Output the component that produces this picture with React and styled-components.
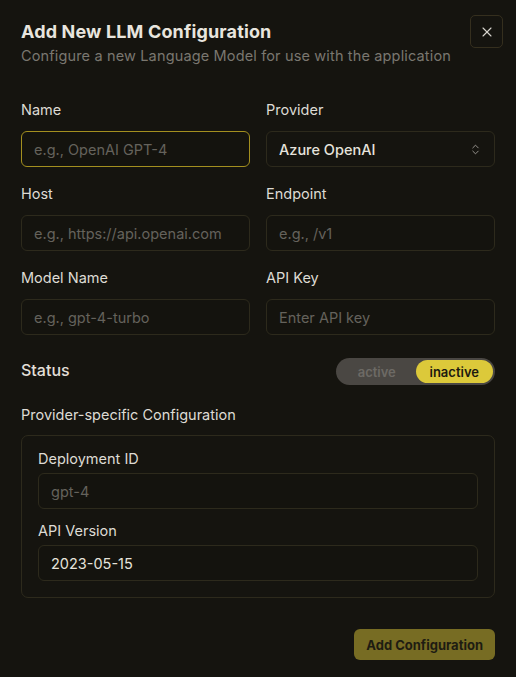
import styled, { createGlobalStyle } from 'styled-components';
import { ChevronsUpDown, X } from 'lucide-react';

const Global = createGlobalStyle`
    html, body {
        margin: 0;
        background: #15140f;
    }
    body {
        font-family: Inter, "Noto Sans", sans-serif;
        color: #e4e1da;
    }
    * { box-sizing: border-box; }
`;

export default function App() {
    return <Dialog>
        <Global />
        <Close aria-label="close"><X size={16} strokeWidth={1.6} /></Close>
        <Header>
            <Title>Add New LLM Configuration</Title>
            <Subtitle>Configure a new Language Model for use with the application</Subtitle>
        </Header>

        <Grid>
            <Field>
                <Label>Name</Label>
                <Input placeholder="e.g., OpenAI GPT-4" focused />
            </Field>
            <Field>
                <Label>Provider</Label>
                <Select>
                    <span>Azure OpenAI</span>
                    <ChevronsUpDown size={13} strokeWidth={1.6} color="#a9a6a0" />
                </Select>
            </Field>
            <Field>
                <Label>Host</Label>
                <Input placeholder="e.g., https://api.openai.com" />
            </Field>
            <Field>
                <Label>Endpoint</Label>
                <Input placeholder="e.g., /v1" />
            </Field>
            <Field>
                <Label>Model Name</Label>
                <Input placeholder="e.g., gpt-4-turbo" />
            </Field>
            <Field>
                <Label>API Key</Label>
                <Input placeholder="Enter API key" />
            </Field>
        </Grid>

        <StatusRow>
            <StatusLabel>Status</StatusLabel>
            <Toggle>
                <ToggleOption>active</ToggleOption>
                <ToggleOption selected>inactive</ToggleOption>
            </Toggle>
        </StatusRow>

        <Section>
            <Label>Provider-specific Configuration</Label>
            <Box>
                <InnerField>
                    <Label>Deployment ID</Label>
                    <Input placeholder="gpt-4" />
                </InnerField>
                <InnerField>
                    <Label>API Version</Label>
                    <Input defaultValue="2023-05-15" />
                </InnerField>
            </Box>
        </Section>

        <Footer>
            <Submit>Add Configuration</Submit>
        </Footer>
    </Dialog>
}

const Dialog = styled.div`
    position: relative;
    width: 516px;
    min-height: 677px;
    padding: 18px 21px 17px;
    display: flex;
    flex-direction: column;
`;

const Close = styled.button`
    position: absolute;
    top: 15px;
    right: 13px;
    width: 33px;
    height: 33px;
    display: flex;
    align-items: center;
    justify-content: center;
    background: none;
    border: 1px solid #352f1e;
    border-radius: 5px;
    color: #d8d5ce;
    padding: 0;
`;

const Header = styled.div`
    display: flex;
    flex-direction: column;
`;

const Title = styled.h2`
    margin: 0;
    font-size: 18px;
    line-height: 28px;
    font-weight: 700;
    letter-spacing: 0.15px;
    color: #e8e5de;
`;

const Subtitle = styled.p`
    margin: 0;
    font-size: 14.5px;
    line-height: 20px;
    letter-spacing: 0.15px;
    color: #7a7770;
`;

const Grid = styled.div`
    margin-top: 34px;
    display: grid;
    grid-template-columns: 1fr 1fr;
    column-gap: 16px;
    row-gap: 17px;
`;

const Field = styled.div`
    display: flex;
    flex-direction: column;
    gap: 11px;
`;

const Label = styled.label`
    font-size: 14.5px;
    line-height: 20px;
    font-weight: 400;
    color: #dedbd4;
`;

const Input = styled.input`
    height: 36px;
    width: 100%;
    padding: 0 12px;
    background: #14130e;
    border: 1px solid ${p => p.focused ? '#a38f1f' : '#2d2a1c'};
    border-radius: 6px;
    font-family: inherit;
    font-size: 14.5px;
    color: #e6e3dc;
    outline: none;

    &::placeholder {
        color: #65625c;
    }
`;

const Select = styled.div`
    height: 36px;
    padding: 0 12px;
    display: flex;
    align-items: center;
    justify-content: space-between;
    border: 1px solid #2d2a1c;
    border-radius: 6px;
    font-size: 14.5px;
    font-weight: 500;
    color: #e6e3dc;
`;

const StatusRow = styled.div`
    margin-top: 23px;
    display: flex;
    align-items: center;
    justify-content: space-between;
`;

const StatusLabel = styled.span`
    padding-bottom: 4px;
    font-size: 16px;
    font-weight: 500;
    color: #e2dfd8;
`;

const Toggle = styled.div`
    width: 159px;
    height: 27px;
    padding: 2px;
    display: grid;
    grid-template-columns: 1fr 1fr;
    background: #4a4743;
    border-radius: 14px;
`;

const ToggleOption = styled.span`
    display: flex;
    align-items: center;
    justify-content: center;
    border-radius: 12px;
    font-size: 13px;
    font-weight: 600;
    color: ${p => p.selected ? '#1c1a10' : '#6d6a65'};
    background: ${p => p.selected ? '#dcc93a' : 'transparent'};
`;

const Section = styled.div`
    margin-top: 20px;
    display: flex;
    flex-direction: column;
    gap: 10px;
`;

const Box = styled.div`
    border: 1px solid #2d2a1c;
    border-radius: 7px;
    padding: 13px 16px 16px;
    display: flex;
    flex-direction: column;
    gap: 12px;
`;

const InnerField = styled.div`
    display: flex;
    flex-direction: column;
    gap: 4px;
`;

const Footer = styled.div`
    margin-top: 31px;
    display: flex;
    justify-content: flex-end;
`;

const Submit = styled.button`
    height: 31px;
    padding: 0 12px;
    background: #776c23;
    border: none;
    border-radius: 6px;
    font-family: inherit;
    font-size: 13px;
    font-weight: 700;
    color: #1e1c12;
`;
